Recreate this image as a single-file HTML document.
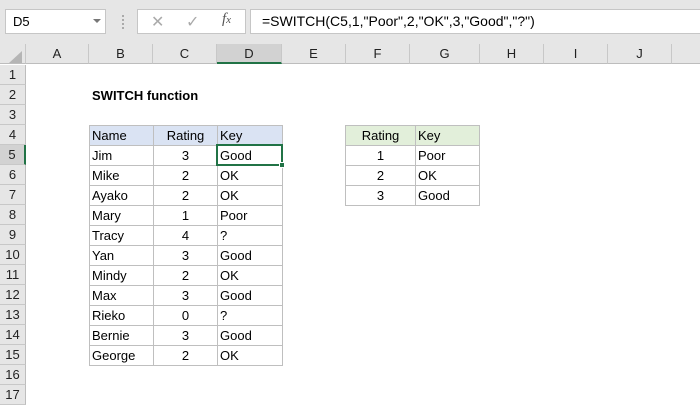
<!DOCTYPE html>
<html><head><meta charset="utf-8"><style>
*{margin:0;padding:0;box-sizing:border-box}
body{width:700px;height:400px;overflow:hidden;background:#fff;font-family:"Liberation Sans",Calibri,sans-serif;font-size:13px;color:#000;position:relative}
.a{position:absolute}
.top{left:0;top:0;width:700px;height:44px;background:#e6e6e6}
.box{background:#fff;border:1px solid #c6c6c6}
.ch{top:44px;height:20px;background:#e6e6e6;border-right:1px solid #c8c8c8;border-bottom:1px solid #bdbdbd;text-align:center;line-height:20px;color:#222}
.rh{left:0;width:26px;height:20px;background:#e6e6e6;border-bottom:1px solid #c8c8c8;border-right:1px solid #bdbdbd;text-align:center;line-height:20px;color:#222}
.c{height:20px;line-height:19px;border:1px solid #bfbfbf;padding:0 2px;white-space:nowrap}
.r{text-align:center}
</style></head><body>
<div class="a top"></div>
<div class="a box" style="left:5px;top:9px;width:101px;height:25px;padding-left:7px;line-height:23px;font-size:13px">D5</div>
<div class="a" style="left:93px;top:19px;width:0;height:0;border-left:4px solid transparent;border-right:4px solid transparent;border-top:4px solid #777"></div>
<div class="a" style="left:122px;top:15px;width:2px;height:14px;border-left:2px dotted #aaa"></div>
<div class="a box" style="left:137px;top:9px;width:109px;height:25px"></div>
<div class="a" style="left:151px;top:12px;color:#aaa;font-size:16px">✕</div>
<div class="a" style="left:186px;top:12px;color:#aaa;font-size:16px">✓</div>
<div class="a" style="left:222px;top:11px;color:#555;font-family:'Liberation Serif',serif;font-style:italic;font-size:15px">f<span style="font-size:11px">x</span></div>
<div class="a box" style="left:250px;top:9px;width:455px;height:25px;padding-left:11px;line-height:23px;font-size:14px">=SWITCH(C5,1,"Poor",2,"OK",3,"Good","?")</div>

<div class="a ch" style="left:0;width:26px"></div>
<div class="a" style="left:9px;top:51px;width:0;height:0;border-left:13px solid transparent;border-bottom:12px solid #b5b5b5"></div>
<div class="a ch" style="left:26px;width:63px">A</div>
<div class="a ch" style="left:89px;width:64px">B</div>
<div class="a ch" style="left:153px;width:64px">C</div>
<div class="a ch" style="left:217px;width:65px;background:#d2d2d2;border-bottom:2px solid #217346">D</div>
<div class="a ch" style="left:282px;width:64px">E</div>
<div class="a ch" style="left:346px;width:64px">F</div>
<div class="a ch" style="left:410px;width:70px">G</div>
<div class="a ch" style="left:480px;width:64px">H</div>
<div class="a ch" style="left:544px;width:64px">I</div>
<div class="a ch" style="left:608px;width:64px">J</div>
<div class="a ch" style="left:672px;width:28px;border-right:none"></div>

<div class="a rh" style="top:65px">1</div><div class="a rh" style="top:85px">2</div><div class="a rh" style="top:105px">3</div><div class="a rh" style="top:125px">4</div>
<div class="a rh" style="top:145px;background:#d2d2d2;border-right:2px solid #217346">5</div>
<div class="a rh" style="top:165px">6</div><div class="a rh" style="top:185px">7</div><div class="a rh" style="top:205px">8</div><div class="a rh" style="top:225px">9</div><div class="a rh" style="top:245px">10</div><div class="a rh" style="top:265px">11</div><div class="a rh" style="top:285px">12</div><div class="a rh" style="top:305px">13</div><div class="a rh" style="top:325px">14</div><div class="a rh" style="top:345px">15</div><div class="a rh" style="top:365px">16</div><div class="a rh" style="top:385px">17</div>

<div class="a" style="left:92px;top:88px;font-weight:bold;font-size:13px">SWITCH function</div>

<table class="a" style="left:89px;top:125px;border-collapse:collapse;font-size:13px">
<tr style="background:#dae3f3"><td class="c" style="width:64px">Name</td><td class="c r" style="width:64px">Rating</td><td class="c" style="width:65px">Key</td></tr>
<tr><td class="c">Jim</td><td class="c r">3</td><td class="c">Good</td></tr>
<tr><td class="c">Mike</td><td class="c r">2</td><td class="c">OK</td></tr>
<tr><td class="c">Ayako</td><td class="c r">2</td><td class="c">OK</td></tr>
<tr><td class="c">Mary</td><td class="c r">1</td><td class="c">Poor</td></tr>
<tr><td class="c">Tracy</td><td class="c r">4</td><td class="c">?</td></tr>
<tr><td class="c">Yan</td><td class="c r">3</td><td class="c">Good</td></tr>
<tr><td class="c">Mindy</td><td class="c r">2</td><td class="c">OK</td></tr>
<tr><td class="c">Max</td><td class="c r">3</td><td class="c">Good</td></tr>
<tr><td class="c">Rieko</td><td class="c r">0</td><td class="c">?</td></tr>
<tr><td class="c">Bernie</td><td class="c r">3</td><td class="c">Good</td></tr>
<tr><td class="c">George</td><td class="c r">2</td><td class="c">OK</td></tr>
</table>
<div class="a" style="left:216px;top:144px;width:67px;height:22px;border:2px solid #217346"></div>
<div class="a" style="left:279px;top:162px;width:6px;height:6px;background:#217346;border:1px solid #fff"></div>

<table class="a" style="left:345px;top:125px;border-collapse:collapse;font-size:13px">
<tr style="background:#e2efda"><td class="c r" style="width:70px">Rating</td><td class="c" style="width:64px">Key</td></tr>
<tr><td class="c r">1</td><td class="c">Poor</td></tr>
<tr><td class="c r">2</td><td class="c">OK</td></tr>
<tr><td class="c r">3</td><td class="c">Good</td></tr>
</table>
</body></html>
